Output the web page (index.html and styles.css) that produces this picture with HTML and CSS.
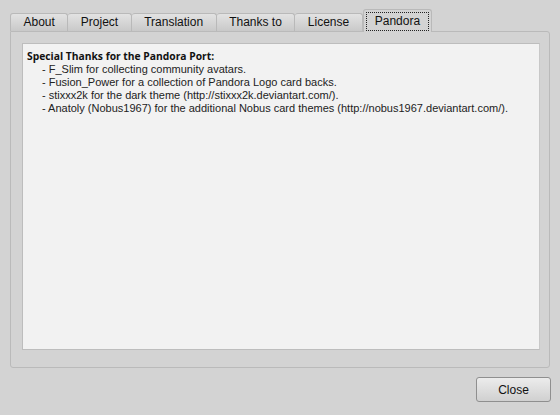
FILE: index.html
```html
<!DOCTYPE html>
<html lang="en">
<head>
    <meta charset="UTF-8">
    <title>About - Pandora</title>
    <link rel="stylesheet" href="styles.css">
</head>
<body>
    <div class="dialog">
        <div class="tabs">
            <div class="tab">About</div>
            <div class="tab">Project</div>
            <div class="tab">Translation</div>
            <div class="tab">Thanks to</div>
            <div class="tab">License</div>
            <div class="tab active"><span class="focus">Pandora</span></div>
        </div>
        <div class="panel">
            <div class="textbox">
                <p class="heading">Special Thanks for the Pandora Port:</p>
                <ul class="credits">
                    <li>- F_Slim for collecting community avatars.</li>
                    <li>- Fusion_Power for a collection of Pandora Logo card backs.</li>
                    <li>- stixxx2k for the dark theme (http://stixxx2k.deviantart.com/).</li>
                    <li>- Anatoly (Nobus1967) for the additional Nobus card themes (http://nobus1967.deviantart.com/).</li>
                </ul>
            </div>
        </div>
        <div class="footer">
            <button class="close">Close</button>
        </div>
    </div>
</body>
</html>
```

FILE: styles.css
```css
body {
    margin: 0;
    background-color: #d3d3d3;
    font-family: "Liberation Sans", Arial, sans-serif;
    color: #111;
}

.dialog {
    padding: 9px 10px 0 10px;
}

.tabs {
    display: flex;
    align-items: flex-end;
    height: 22px;
}

.tab {
    height: 18px;
    line-height: 17px;
    padding: 0 12.5px;
    font-size: 12px;
    box-sizing: border-box;
    border: 1px solid #b9b9b9;
    border-bottom: none;
    border-left: none;
    border-radius: 3px 3px 0 0;
    background: linear-gradient(#e2e2e2, #c9c9c9);
}

.tab:first-child {
    border-left: 1px solid #b9b9b9;
}

.tab.active {
    height: 23px;
    margin-bottom: -1px;
    padding: 2px 2px 0 2px;
    border-left: 1px solid #b9b9b9;
    background: #d3d3d3;
}

.focus {
    display: block;
    padding: 0 8px;
    height: 17px;
    line-height: 16px;
    border: 1px dotted #222;
}

.panel {
    height: 337px;
    box-sizing: border-box;
    border: 1px solid #bababa;
    border-radius: 0 3px 3px 3px;
    padding: 11px 9px 17px 11px;
}

.textbox {
    height: 100%;
    box-sizing: border-box;
    background-color: #f2f2f2;
    border: 1px solid #bdbdbd;
    border-right-color: #c8c8c8;
    padding: 5px 4px;
    font-size: 11px;
}

.heading {
    margin: 0;
    font-family: "Open Sans", sans-serif;
    font-weight: bold;
    font-size: 10.3px;
    line-height: 14px;
}

.credits {
    list-style: none;
    margin: 0;
    padding: 0 0 0 15px;
    line-height: 13px;
    color: #222;
}

.footer {
    display: flex;
    justify-content: flex-end;
    padding-top: 9px;
}

.close {
    width: 75px;
    height: 25px;
    font-family: "Liberation Sans", Arial, sans-serif;
    font-size: 12px;
    color: #111;
    border: 1px solid #8f8f8f;
    border-radius: 3px;
    background: linear-gradient(#ececec, #d0d0d0);
    margin-right: -1px;
}
```
